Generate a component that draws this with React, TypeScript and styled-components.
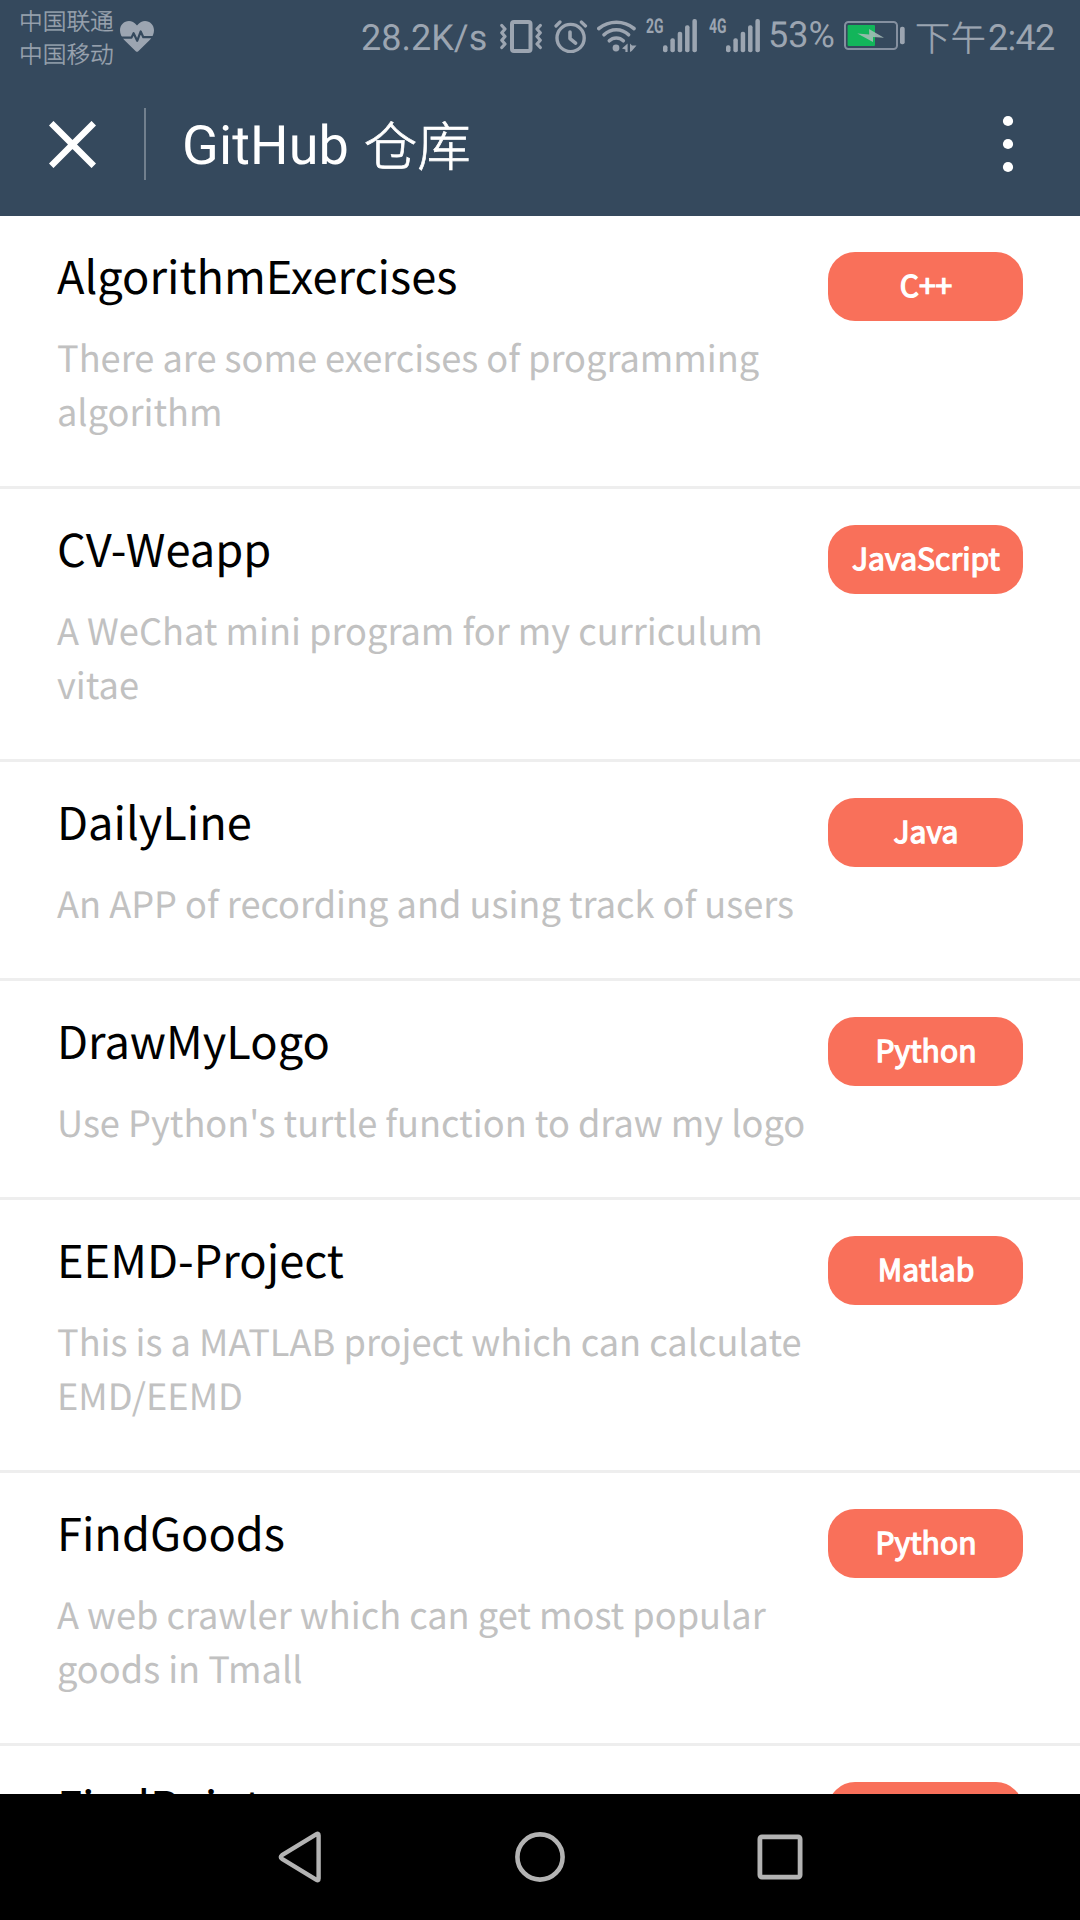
import React from "react";
import styled, { createGlobalStyle } from "styled-components";

const colors = {
  bar: "#35495d",
  status: "#9ca5b1",
  tag: "#f9705a",
  line: "#eeeeee",
  muted: "#c1c1c1",
  nav: "#b3b3b3",
};

const GlobalStyle = createGlobalStyle`
  html, body { margin: 0; padding: 0; background: #fff; }
  * { box-sizing: border-box; }
  svg { display: block; flex: none; }
`;

const Screen = styled.div`
  display: flex;
  flex-direction: column;
  width: 1080px;
  height: 1920px;
  overflow: hidden;
  font-family: "Noto Sans CJK SC", sans-serif;
  text-rendering: geometricPrecision;
  background: #fff;
`;

const StatusBar = styled.div`
  display: flex;
  flex: none;
  align-items: flex-start;
  height: 72px;
  padding-left: 19px;
  background: ${colors.bar};
  color: ${colors.status};
`;

const Carriers = styled.div`
  width: 100px;
  padding-top: 4px;
  font-size: 23.7px;
  line-height: 33px;
  font-weight: 300;
  -webkit-text-stroke: 0.35px ${colors.status};
  white-space: nowrap;
`;

const StatusIcon = styled.svg<{ $left?: number; $top?: number }>`
  margin-left: ${(p) => p.$left ?? 0}px;
  margin-top: ${(p) => p.$top ?? 19}px;
  fill: none;
  stroke-linecap: round;
  stroke-linejoin: round;
`;

const StatusText = styled.div<{ $left: number; $width: number; $top: number }>`
  margin-left: ${(p) => p.$left}px;
  margin-top: ${(p) => p.$top}px;
  width: ${(p) => p.$width}px;
  font: 400 36px/42px Roboto, sans-serif;
  white-space: nowrap;
`;

const NetworkLabel = styled.div<{ $left: number }>`
  margin: 15px 0 0 ${(p) => p.$left}px;
  width: 17px;
  font: 700 20.5px/24px Roboto, sans-serif;
  transform: scaleX(0.68);
  transform-origin: left;
`;

const Clock = styled.div`
  display: flex;
  margin-left: 10px;
  white-space: nowrap;
`;

const DayPart = styled.span`
  width: 73px;
  padding-top: 12px;
  font-size: 35px;
  font-weight: 300;
  line-height: 50px;
  letter-spacing: 0.8px;
  -webkit-text-stroke: 0.5px ${colors.status};
`;

const Time = styled.span`
  padding-top: 17px;
  font: 400 36px/42px Roboto, sans-serif;
  letter-spacing: -0.7px;
`;

const TitleBar = styled.header`
  display: flex;
  flex: none;
  align-items: center;
  height: 144px;
  padding: 0 66px 0 49px;
  background: ${colors.bar};
  color: #fff;
`;

const Divider = styled.div`
  width: 2px;
  height: 72px;
  margin-left: 48px;
  background: #72808e;
`;

const PageTitle = styled.h1`
  display: flex;
  flex: 1;
  margin: 6px 0 0 36px;
  font: 400 54px/72px Roboto, "Noto Sans CJK SC", sans-serif;
  letter-spacing: 0.15px;
  white-space: pre;
`;

const TitleHan = styled.span`
  margin: -3px 0 0 1px;
  font: 300 53.5px/72px "Noto Sans CJK SC", sans-serif;
  -webkit-text-stroke: 0.7px #fff;
`;

const RepoList = styled.main`
  flex: 1;
  min-height: 0;
  overflow: hidden;
`;

const Repo = styled.article`
  display: flex;
  justify-content: space-between;
  align-items: flex-start;
  padding: 24px 57px 48px;
  border-bottom: 3px solid ${colors.line};
`;

const RepoText = styled.div`
  width: 750px;
  padding-top: 2px;
`;

const RepoName = styled.h2`
  margin: 0 0 20px;
  color: #000;
  font-size: 45.2px;
  font-weight: 400;
  line-height: 68px;
`;

const RepoSummary = styled.p`
  margin: 0;
  color: ${colors.muted};
  font-size: 36.18px;
  line-height: 54px;
`;

const Tag = styled.span`
  flex: none;
  width: 195px;
  height: 69px;
  margin-top: 12px;
  border-radius: 27px;
  background: ${colors.tag};
  color: #fff;
  font-size: 30px;
  line-height: 64px;
  letter-spacing: 0.08px;
  text-align: center;
  text-indent: 1px;
  -webkit-text-stroke: 1.3px #fff;
`;

const NavBar = styled.nav`
  display: flex;
  flex: none;
  justify-content: center;
  height: 126px;
  background: #000;
`;

const NavKey = styled.div`
  display: flex;
  justify-content: center;
  align-items: center;
  width: 240px;
`;

const repos = [
  { name: "AlgorithmExercises", lines: ["There are some exercises of programming", "algorithm"], lang: "C++" },
  { name: "CV-Weapp", lines: ["A WeChat mini program for my curriculum", "vitae"], lang: "JavaScript" },
  { name: "DailyLine", lines: ["An APP of recording and using track of users"], lang: "Java" },
  { name: "DrawMyLogo", lines: ["Use Python's turtle function to draw my logo"], lang: "Python" },
  { name: "EEMD-Project", lines: ["This is a MATLAB project which can calculate", "EMD/EEMD"], lang: "Matlab" },
  { name: "FindGoods", lines: ["A web crawler which can get most popular", "goods in Tmall"], lang: "Python" },
  { name: "FindPoint", lines: [], lang: "" },
];

const s = colors.status;

const HeartIcon = () => (
  <StatusIcon width="35" height="32" viewBox="0 0 35 32" $top={21} $left={1}>
    <path
      fill={s}
      d="M17 4.5C14.5 1.2 11.5 0 9 0C4 0 0 4 0 9.3C0 13 1.5 15.8 4 18.7L16 30.4Q17 31.2 18 30.4L30 18.7C32.5 15.8 34 13 34 9.3C34 4 30 0 25 0C22.5 0 19.5 1.2 17 4.5Z"
    />
    <path stroke={colors.bar} strokeWidth="2.2" d="M-1 16.6H11.5L13.6 12.2L17.2 19.8L20.7 10.5L23.3 16.2H36" />
  </StatusIcon>
);

const VibrateIcon = () => (
  <StatusIcon width="42" height="34" viewBox="500 19 42 34" stroke={s} $left={13}>
    <rect x="512" y="22" width="18.5" height="29" rx="2" strokeWidth="4" />
    <path strokeWidth="3.2" d="M501.8 25.5L505 29L501.8 32.7L505 36.5L501.8 40.2L505 44L501.8 47.5" />
    <path strokeWidth="3.2" d="M540.3 25.5L537 29L540.3 32.7L537 36.5L540.3 40.2L537 44L540.3 47.5" />
  </StatusIcon>
);

const AlarmIcon = () => (
  <StatusIcon width="34" height="34" viewBox="554 19 34 34" stroke={s} $left={12}>
    <circle cx="570.6" cy="38" r="13.6" strokeWidth="3.4" />
    <path strokeWidth="3.6" d="M570 32V38.6L575.6 43.2" />
    <path strokeWidth="3.2" d="M556 26L560 22M581.3 22L585.5 26" />
  </StatusIcon>
);

const WifiIcon = () => (
  <StatusIcon width="40" height="34" viewBox="597 19 40 34" stroke={s} $left={9}>
    <path strokeWidth="3.6" d="M598.8 28.5A28 28 0 0 1 634 28.5" />
    <path strokeWidth="3.6" d="M604 34.8A17.5 17.5 0 0 1 628.6 34.8" />
    <path strokeWidth="3.6" d="M609.3 40.8A10 10 0 0 1 623.3 40.8" />
    <circle cx="616" cy="48" r="3.4" fill={s} stroke="none" />
    <path fill={s} stroke="none" d="M622 48.6L627.6 43.5V52H625.4V49.6ZM630 43.5L632 45.5H636.5L631.8 51L630 52Z" />
  </StatusIcon>
);

const SignalIcon = () => (
  <StatusIcon width="34" height="34" viewBox="0 0 34 34">
    {[7, 14, 20.4, 27, 33.2].map((h, i) => (
      <rect key={h} x={i * 7.35} y={33.2 - h} width="4.5" height={h} rx="2" fill={s} />
    ))}
  </StatusIcon>
);

const BatteryIcon = () => (
  <StatusIcon width="61" height="30" viewBox="844 21 61 30" $left={10} $top={21}>
    <rect x="845" y="22" width="52" height="27" rx="3.5" stroke="#8590a0" strokeWidth="2" />
    <rect x="847.6" y="25" width="27.4" height="21" rx="1" fill="#12b55a" />
    <rect x="900" y="26.7" width="4.7" height="17.6" rx="2" fill={s} />
    <path fill="#a9bdb9" fillOpacity="0.85" d="M857.3 33.6L869.2 34.4L869 29L884 37.7L873 37L873 42Z" />
  </StatusIcon>
);

export default function App() {
  return (
    <Screen>
      <GlobalStyle />
      <StatusBar>
        <Carriers>
          <div>中国联通</div>
          <div>中国移动</div>
        </Carriers>
        <HeartIcon />
        <StatusText $left={206} $width={126} $top={17}>28.2K/s</StatusText>
        <VibrateIcon />
        <AlarmIcon />
        <WifiIcon />
        <NetworkLabel $left={9}>2G</NetworkLabel>
        <SignalIcon />
        <NetworkLabel $left={12}>4G</NetworkLabel>
        <SignalIcon />
        <StatusText $left={8} $width={66} $top={14}>53%</StatusText>
        <BatteryIcon />
        <Clock>
          <DayPart>下午</DayPart>
          <Time>2:42</Time>
        </Clock>
      </StatusBar>
      <TitleBar>
        <svg width="47" height="47" viewBox="0 0 47 47" stroke="#fff" strokeWidth="6.4">
          <path d="M2.2 2.2L44.8 44.8M44.8 2.2L2.2 44.8" />
        </svg>
        <Divider />
        <PageTitle>
          {"GitHub "}
          <TitleHan>仓库</TitleHan>
        </PageTitle>
        <svg width="12" height="58" viewBox="0 0 12 58" fill="#fff">
          <circle cx="6" cy="6" r="5.1" />
          <circle cx="6" cy="29" r="5.1" />
          <circle cx="6" cy="52" r="5.1" />
        </svg>
      </TitleBar>
      <RepoList>
        {repos.map((repo) => (
          <Repo key={repo.name}>
            <RepoText>
              <RepoName>{repo.name}</RepoName>
              {repo.lines.map((line) => (
                <RepoSummary key={line}>{line}</RepoSummary>
              ))}
            </RepoText>
            <Tag>{repo.lang}</Tag>
          </Repo>
        ))}
      </RepoList>
      <NavBar>
        <NavKey>
          <svg width="44" height="52" viewBox="0 0 44 52" fill="none" stroke={colors.nav} strokeWidth="4.4" strokeLinejoin="round">
            <path d="M40.6 4.4Q40.6 2 38.5 3.2L4 24.2Q1.6 26 4 27.8L38.5 48.8Q40.6 50 40.6 47.6Z" />
          </svg>
        </NavKey>
        <NavKey>
          <svg width="50" height="50" viewBox="0 0 50 50" fill="none" stroke={colors.nav} strokeWidth="4.6">
            <circle cx="25" cy="25" r="22.6" />
          </svg>
        </NavKey>
        <NavKey>
          <svg width="46" height="46" viewBox="0 0 46 46" fill="none" stroke={colors.nav} strokeWidth="4.8">
            <rect x="2.9" y="2.9" width="40.2" height="40.2" rx="2" />
          </svg>
        </NavKey>
      </NavBar>
    </Screen>
  );
}
